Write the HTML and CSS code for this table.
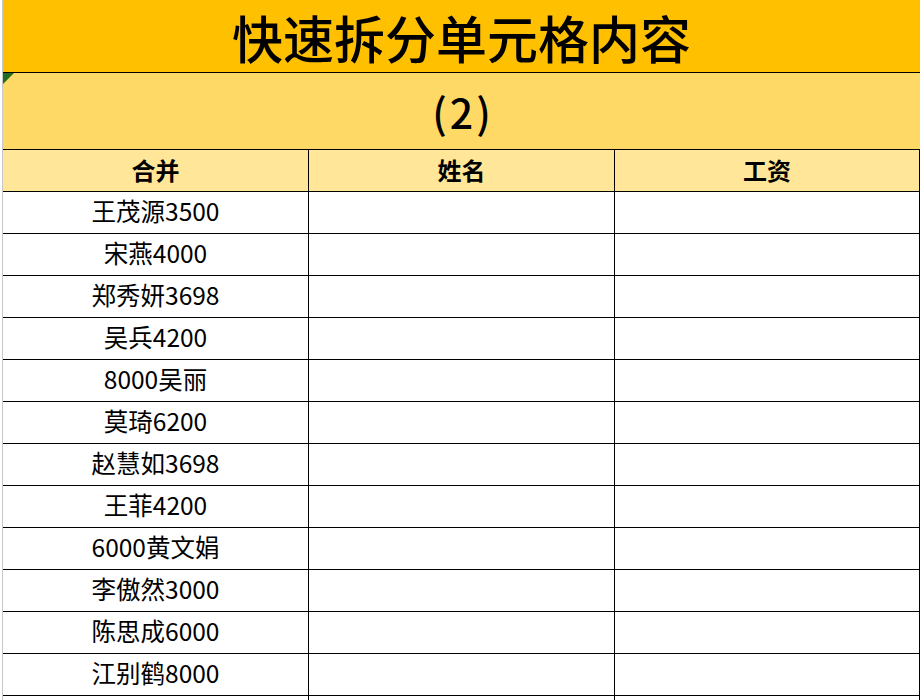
FILE: index.html
```html
<!DOCTYPE html>
<html lang="zh">
<head>
<meta charset="utf-8">
<title>快速拆分单元格内容</title>
<link rel="stylesheet" href="styles.css">
</head>
<body>
<div class="sheet">
  <div class="title">快速拆分单元格内容</div>
  <div class="subtitle"><span class="flag"></span>(2)</div>
  <div class="grid">
    <div class="cell head">合并</div><div class="cell head">姓名</div><div class="cell head">工资</div>
    <div class="cell">王茂源3500</div><div class="cell"></div><div class="cell"></div>
    <div class="cell">宋燕4000</div><div class="cell"></div><div class="cell"></div>
    <div class="cell">郑秀妍3698</div><div class="cell"></div><div class="cell"></div>
    <div class="cell">吴兵4200</div><div class="cell"></div><div class="cell"></div>
    <div class="cell">8000吴丽</div><div class="cell"></div><div class="cell"></div>
    <div class="cell">莫琦6200</div><div class="cell"></div><div class="cell"></div>
    <div class="cell">赵慧如3698</div><div class="cell"></div><div class="cell"></div>
    <div class="cell">王菲4200</div><div class="cell"></div><div class="cell"></div>
    <div class="cell">6000黄文娟</div><div class="cell"></div><div class="cell"></div>
    <div class="cell">李傲然3000</div><div class="cell"></div><div class="cell"></div>
    <div class="cell">陈思成6000</div><div class="cell"></div><div class="cell"></div>
    <div class="cell">江别鹤8000</div><div class="cell"></div><div class="cell"></div>
    <div class="cell"></div><div class="cell"></div><div class="cell"></div>
  </div>
</div>
</body>
</html>
```
FILE: styles.css
```css
html, body {
  margin: 0;
  padding: 0;
  background: #ffffff;
  overflow: hidden;
  height: 700px;
}
body {
  font-family: "Noto Sans CJK SC", "Noto Sans", sans-serif;
  color: #000;
}
.sheet {
  margin-left: 2px;
  border-left: 1px solid #c8c8c8;
  width: 917px;
  height: 700px;
  overflow: hidden;
}
.title {
  box-sizing: border-box;
  height: 73px;
  background: #ffc000;
  border-bottom: 1px solid #000;
  display: flex;
  align-items: center;
  justify-content: center;
  font-size: 51px;
  font-weight: 500;
  line-height: 1;
  padding-top: 2px;
}
.subtitle {
  position: relative;
  box-sizing: border-box;
  height: 77px;
  background: #ffd966;
  border-bottom: 1px solid #000;
  display: flex;
  align-items: center;
  justify-content: center;
  font-size: 41px;
  font-weight: 500;
  letter-spacing: 3px;
  text-indent: 3px;
  line-height: 1;
}
.flag {
  position: absolute;
  left: 0;
  top: 0;
  width: 0;
  height: 0;
  border-top: 11px solid #1f6b1f;
  border-right: 11px solid transparent;
}
.grid {
  display: grid;
  grid-template-columns: 306px 306px 1fr;
}
.cell {
  box-sizing: border-box;
  height: 42px;
  border-right: 1px solid #000;
  border-bottom: 1px solid #000;
  display: flex;
  align-items: center;
  justify-content: center;
  font-size: 24.5px;
  line-height: 1;
  padding-bottom: 2px;
}
.head {
  background: #ffe699;
  font-weight: 700;
  font-size: 24px;
}
```
